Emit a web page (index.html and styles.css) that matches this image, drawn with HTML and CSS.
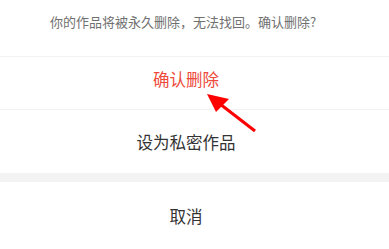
FILE: index.html
```html
<!DOCTYPE html>
<html lang="zh-CN">
<head>
    <meta charset="UTF-8">
    <title>删除作品</title>
    <link rel="stylesheet" href="styles.css">
</head>
<body>
    <div class="sheet">
        <p class="tip">你的作品将被永久删除，无法找回。确认删除?</p>
        <div class="item danger">确认删除</div>
        <div class="item private">设为私密作品</div>
        <div class="gap"></div>
        <div class="item cancel">取消</div>

        <svg class="arrow" width="389" height="249" viewBox="0 0 389 249">
            <line x1="255" y1="131" x2="220" y2="104" stroke="#ff0000" stroke-width="3"/>
            <polygon points="207,94 229,99 216,112" fill="#ff0000"/>
        </svg>
    </div>
</body>
</html>
```
FILE: styles.css
```css
*{
    padding:0;
    margin:0;
}
html,body{
    width:100%;
    height:100%;
    background-color:#fff;
    overflow:hidden;
}
.sheet{
    position:relative;
    font-family:"Noto Sans CJK SC","Liberation Sans",sans-serif;
    text-align:center;
}
.tip{
    height:57px;
    box-sizing:border-box;
    padding:12px 23px 0 0;
    font-size:13px;
    line-height:19px;
    color:#707070;
    border-bottom:1px solid #f2f2f2;
}
.item{
    padding-right:17px;
    font-size:16.5px;
    color:#333;
}
.danger{
    height:53px;
    box-sizing:border-box;
    padding-top:10px;
    line-height:24px;
    color:#ee4a3b;
    border-bottom:1px solid #f2f2f2;
}
.private{
    height:63px;
    line-height:64px;
}
.gap{
    height:9px;
    background-color:#f3f3f3;
}
.cancel{
    height:65px;
    box-sizing:border-box;
    padding-top:2px;
    line-height:64px;
}
.arrow{
    position:absolute;
    left:0;
    top:0;
}
```
